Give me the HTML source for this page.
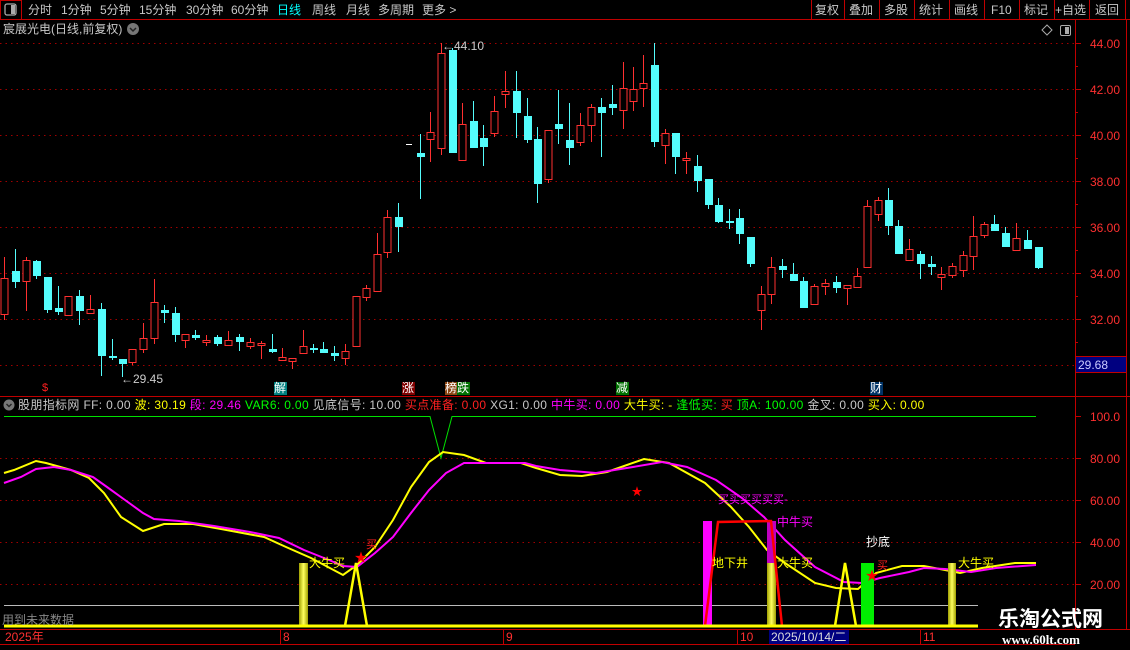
<!DOCTYPE html>
<html><head><meta charset="utf-8">
<style>
*{margin:0;padding:0;box-sizing:border-box}
body{width:1130px;height:650px;background:#000;overflow:hidden;position:relative;font-family:"Liberation Sans","Noto Sans CJK SC",sans-serif;font-size:12px;color:#c8c8c8}
.a{position:absolute;white-space:nowrap;line-height:14px}
svg{position:absolute;left:0;top:0}
</style></head><body>
<svg id="s" width="1130" height="650" xmlns="http://www.w3.org/2000/svg">
<line x1="0" y1="19.5" x2="1130" y2="19.5" stroke="#c00000"/>
<rect x="0.5" y="0.5" width="21" height="19" fill="none" stroke="#c00000"/>
<rect x="5" y="4" width="11" height="11" rx="2" fill="none" stroke="#aaa" stroke-width="1.3"/>
<rect x="11" y="5" width="4" height="9" fill="#aaa"/>
<g stroke="#c00000">
<line x1="811.5" y1="0" x2="811.5" y2="19"/><line x1="844.5" y1="0" x2="844.5" y2="19"/><line x1="879.5" y1="0" x2="879.5" y2="19"/><line x1="914.5" y1="0" x2="914.5" y2="19"/><line x1="949.5" y1="0" x2="949.5" y2="19"/><line x1="984.5" y1="0" x2="984.5" y2="19"/><line x1="1019.5" y1="0" x2="1019.5" y2="19"/><line x1="1054.5" y1="0" x2="1054.5" y2="19"/><line x1="1089.5" y1="0" x2="1089.5" y2="19"/><line x1="1125.5" y1="0" x2="1125.5" y2="19"/>
</g>
<circle cx="133" cy="29" r="6" fill="#777"/><path d="M130 28 L133 31 L136 28" fill="none" stroke="#222" stroke-width="1.5"/>
<path d="M1047 25 L1052 30 L1047 35 L1042 30 Z" fill="none" stroke="#aaa"/>
<rect x="1060.5" y="25.5" width="10" height="10" rx="1.5" fill="none" stroke="#aaa"/><rect x="1065" y="27" width="4" height="7" fill="#aaa"/>
<line x1="1075.5" y1="19" x2="1075.5" y2="629" stroke="#c00000"/>
<line x1="1126.5" y1="19" x2="1126.5" y2="629" stroke="#c00000"/>
<rect x="1075.5" y="356.5" width="51" height="16" fill="#000080" stroke="#c00000"/>
<g stroke="#a00000" stroke-dasharray="1.5,4">
<line x1="0" y1="43.5" x2="1075" y2="43.5"/><line x1="0" y1="89.5" x2="1075" y2="89.5"/><line x1="0" y1="135.5" x2="1075" y2="135.5"/><line x1="0" y1="181.5" x2="1075" y2="181.5"/><line x1="0" y1="227.5" x2="1075" y2="227.5"/><line x1="0" y1="273.5" x2="1075" y2="273.5"/><line x1="0" y1="319.5" x2="1075" y2="319.5"/><line x1="0" y1="365.5" x2="1075" y2="365.5"/>
<line x1="0" y1="458.5" x2="1075" y2="458.5"/><line x1="0" y1="500.5" x2="1075" y2="500.5"/><line x1="0" y1="542.5" x2="1075" y2="542.5"/><line x1="0" y1="584.5" x2="1075" y2="584.5"/>
</g>
<g stroke="#c00000">
<line x1="1075" y1="43.5" x2="1081" y2="43.5"/><line x1="1075" y1="89.5" x2="1081" y2="89.5"/><line x1="1075" y1="135.5" x2="1081" y2="135.5"/><line x1="1075" y1="181.5" x2="1081" y2="181.5"/><line x1="1075" y1="227.5" x2="1081" y2="227.5"/><line x1="1075" y1="273.5" x2="1081" y2="273.5"/><line x1="1075" y1="319.5" x2="1081" y2="319.5"/>
<line x1="1075" y1="66.5" x2="1078" y2="66.5"/><line x1="1075" y1="112.5" x2="1078" y2="112.5"/><line x1="1075" y1="158.5" x2="1078" y2="158.5"/><line x1="1075" y1="204.5" x2="1078" y2="204.5"/><line x1="1075" y1="250.5" x2="1078" y2="250.5"/><line x1="1075" y1="296.5" x2="1078" y2="296.5"/><line x1="1075" y1="342.5" x2="1078" y2="342.5"/>
<line x1="1075" y1="416.5" x2="1081" y2="416.5"/><line x1="1075" y1="458.5" x2="1081" y2="458.5"/><line x1="1075" y1="500.5" x2="1081" y2="500.5"/><line x1="1075" y1="542.5" x2="1081" y2="542.5"/><line x1="1075" y1="584.5" x2="1081" y2="584.5"/>
</g>
<line x1="0" y1="396.5" x2="1130" y2="396.5" stroke="#c00000"/>
<g id="candles"></g>
<line x1="406" y1="144.5" x2="412" y2="144.5" stroke="#fff"/>
<rect x="274" y="382" width="13" height="13" fill="#008080"/>
<rect x="402" y="382" width="13" height="13" fill="#800000"/>
<rect x="445" y="382" width="12" height="13" fill="#8b4513"/>
<rect x="457" y="382" width="13" height="13" fill="#007000"/>
<rect x="616" y="382" width="13" height="13" fill="#007000"/>
<rect x="870" y="382" width="13" height="13" fill="#003366"/>
<circle cx="9" cy="405" r="5.5" fill="#777"/><path d="M6.5 404 L9 406.5 L11.5 404" fill="none" stroke="#222" stroke-width="1.4"/>
<polyline points="4,416.5 430,416.5 441,458 452,416.5 1036,416.5" fill="none" stroke="#00e000"/>
<line x1="4" y1="605.5" x2="978" y2="605.5" stroke="#bbb"/>
<polyline fill="none" stroke="#ffff00" stroke-width="2" points="4,473 14,470 36,461 46,463 71,470 89,478 104,493 121,517 143,531 164,524 193,524 221,529 264,537 286,547 311,558 343,575 357,565 375,547 393,520 411,487 429,462 443,452 464,455 486,463 521,463 536,468 560,475 582,476 607,472 644,459 669,463 705,483 731,507 749,527 767,550 785,563 815,583 836,588 858,589 876,573 902,566 924,566 945,570 960,573 982,568 1015,563 1036,563"/>
<polyline fill="none" stroke="#ff00ff" stroke-width="2" points="4,483 21,477 36,469 54,467 71,470 93,477 107,487 125,500 143,513 154,519 179,521 214,526 250,532 279,538 304,550 329,560 343,566 357,567 375,553 393,537 411,513 429,490 446,473 464,463 500,463 525,463 536,466 560,470 596,473 633,467 662,462 687,467 716,480 742,498 764,517 785,540 815,567 844,582 862,583 880,578 909,572 924,568 945,569 971,572 996,568 1036,565"/>
<defs><linearGradient id="yg" x1="0" x2="1"><stop offset="0" stop-color="#a0a000"/><stop offset="0.5" stop-color="#ffff60"/><stop offset="1" stop-color="#a0a000"/></linearGradient></defs>
<rect x="299" y="563" width="9" height="63" fill="url(#yg)"/>
<rect x="767" y="563" width="9" height="63" fill="url(#yg)"/>
<rect x="948" y="563" width="8" height="63" fill="url(#yg)"/>
<rect x="767" y="521" width="9" height="42" fill="#c000c0"/>
<rect x="703" y="521" width="9" height="105" fill="#ff00ff"/>
<rect x="861" y="563" width="13" height="63" fill="#00ee00"/>
<polyline points="705,626 718,522 771,521 782,626" fill="none" stroke="#ff0000" stroke-width="2.5"/>
<polyline points="345,626 356,563 367,626" fill="none" stroke="#ffff00" stroke-width="2.5"/>
<polyline points="835,626 845,563 856,626" fill="none" stroke="#ffff00" stroke-width="2.5"/>
<line x1="4" y1="626" x2="978" y2="626" stroke="#ffff00" stroke-width="3"/>
<text x="361" y="562" fill="#ff0000" font-size="13" text-anchor="middle">★</text>
<text x="637" y="495" fill="#ff0000" font-size="11" text-anchor="middle">★</text>
<text x="872" y="580" fill="#ff0000" font-size="13" text-anchor="middle">★</text>
<line x1="0" y1="629.5" x2="1130" y2="629.5" stroke="#c00000"/>
<line x1="0" y1="644.5" x2="1075" y2="644.5" stroke="#c00000"/>
<g stroke="#c00000"><line x1="280.5" y1="630" x2="280.5" y2="644"/><line x1="503.5" y1="630" x2="503.5" y2="644"/><line x1="737.5" y1="630" x2="737.5" y2="644"/><line x1="920.5" y1="630" x2="920.5" y2="644"/></g>
<rect x="769" y="630" width="80" height="14" fill="#000080"/>
</svg>

<div class="a" style="left:28px;top:3px">分时</div>
<div class="a" style="left:61px;top:3px">1分钟</div>
<div class="a" style="left:100px;top:3px">5分钟</div>
<div class="a" style="left:139px;top:3px">15分钟</div>
<div class="a" style="left:186px;top:3px">30分钟</div>
<div class="a" style="left:231px;top:3px">60分钟</div>
<div class="a" style="left:277px;top:3px;color:#00ffff">日线</div>
<div class="a" style="left:312px;top:3px">周线</div>
<div class="a" style="left:346px;top:3px">月线</div>
<div class="a" style="left:378px;top:3px">多周期</div>
<div class="a" style="left:422px;top:3px">更多 &gt;</div>
<div class="a" style="left:815px;top:3px">复权</div>
<div class="a" style="left:849px;top:3px">叠加</div>
<div class="a" style="left:884px;top:3px">多股</div>
<div class="a" style="left:919px;top:3px">统计</div>
<div class="a" style="left:954px;top:3px">画线</div>
<div class="a" style="left:991px;top:3px">F10</div>
<div class="a" style="left:1024px;top:3px">标记</div>
<div class="a" style="left:1055px;top:3px">+自选</div>
<div class="a" style="left:1095px;top:3px">返回</div>
<div class="a" style="left:3px;top:22px">宸展光电(日线,前复权)</div>

<div class="a" style="left:1090px;top:37px;color:#ff3030">44.00</div>
<div class="a" style="left:1090px;top:83px;color:#ff3030">42.00</div>
<div class="a" style="left:1090px;top:129px;color:#ff3030">40.00</div>
<div class="a" style="left:1090px;top:175px;color:#ff3030">38.00</div>
<div class="a" style="left:1090px;top:221px;color:#ff3030">36.00</div>
<div class="a" style="left:1090px;top:267px;color:#ff3030">34.00</div>
<div class="a" style="left:1090px;top:313px;color:#ff3030">32.00</div>
<div class="a" style="left:1078px;top:358px;color:#ccccff">29.68</div>
<div class="a" style="left:1090px;top:410px;color:#ff3030">100.0</div>
<div class="a" style="left:1090px;top:452px;color:#ff3030">80.00</div>
<div class="a" style="left:1090px;top:494px;color:#ff3030">60.00</div>
<div class="a" style="left:1090px;top:536px;color:#ff3030">40.00</div>
<div class="a" style="left:1090px;top:578px;color:#ff3030">20.00</div>
<div class="a" style="left:442px;top:39px;color:#ccc">←44.10</div>
<div class="a" style="left:121px;top:372px;color:#ccc">←29.45</div>

<div class="a" style="left:42px;top:381px;color:#ff2020;font-size:11px">$</div>
<div class="a" style="left:274px;top:381px;color:#fff">解</div>
<div class="a" style="left:402px;top:381px;color:#fff">涨</div>
<div class="a" style="left:445px;top:381px;color:#fff">榜跌</div>
<div class="a" style="left:616px;top:381px;color:#fff">减</div>
<div class="a" style="left:870px;top:381px;color:#fff">财</div>

<div class="a" style="left:18px;top:398px;letter-spacing:0.35px">股朋指标网 <span>FF: 0.00</span> <span style="color:#ffff00">波: 30.19</span> <span style="color:#ff00ff">段: 29.46</span> <span style="color:#00ff00">VAR6: 0.00</span> <span>见底信号: 10.00</span> <span style="color:#ff2020">买点准备: 0.00</span> <span>XG1: 0.00</span> <span style="color:#ff00ff">中牛买: 0.00</span> <span style="color:#ffff00">大牛买: -</span> <span style="color:#00ff00">逢低买:</span> <span style="color:#ff2020">买</span> <span style="color:#00ff00">顶A: 100.00</span> <span>金叉: 0.00</span> <span style="color:#ffff00">买入: 0.00</span></div>

<div class="a" style="left:309px;top:556px;color:#ffff00">大牛买</div>
<div class="a" style="left:366px;top:538px;color:#ff2020;font-size:11px">买</div>
<div class="a" style="left:718px;top:493px;color:#ff00ff;font-size:11px">买买买买买买-</div>
<div class="a" style="left:777px;top:515px;color:#ff00ff">中牛买</div>
<div class="a" style="left:712px;top:556px;color:#ffff00">地下井</div>
<div class="a" style="left:777px;top:556px;color:#ffff00">大牛买</div>
<div class="a" style="left:866px;top:535px;color:#fff">抄底</div>
<div class="a" style="left:877px;top:559px;color:#ff2020;font-size:11px">买</div>
<div class="a" style="left:958px;top:556px;color:#ffff00">大牛买</div>
<div class="a" style="left:2px;top:613px;color:#888">用到未来数据</div>

<div class="a" style="left:5px;top:630px;color:#ff3030">2025年</div>
<div class="a" style="left:283px;top:630px;color:#ff3030">8</div>
<div class="a" style="left:506px;top:630px;color:#ff3030">9</div>
<div class="a" style="left:740px;top:630px;color:#ff3030">10</div>
<div class="a" style="left:771px;top:630px;color:#ddd">2025/10/14/二</div>
<div class="a" style="left:923px;top:630px;color:#ff3030">11</div>

<div class="a" style="left:998px;top:608px;color:#fff;font-size:21px;font-weight:bold;line-height:24px">乐淘公式网</div>
<div class="a" style="left:1002px;top:632px;color:#fff;font-family:'Liberation Serif',serif;font-size:13px;font-weight:bold;line-height:15px">www.60lt.com</div>

<script>
var C=[
[4,278,314,257,320,1],[15,271,282,249,288,0],[26,260,281,257,311,1],[36,261,276,260,279,0],[47,277,310,277,313,0],[58,308,312,286,315,0],[68,296,315,296,315,1],[79,296,311,290,325,0],[90,309,313,295,314,1],[101,309,356,303,376,0],[112,356,358,339,360,0],[122,359,364,359,377,0],[132,349,362,349,365,1],[143,338,349,323,353,1],[154,302,338,279,344,1],[164,310,313,305,323,0],[175,313,335,307,342,0],[185,334,340,334,348,1],[195,335,338,330,340,0],[206,340,342,335,346,1],[217,337,344,335,346,0],[228,340,345,331,345,1],[239,337,342,334,351,0],[250,342,346,338,349,1],[261,343,345,341,359,1],[272,349,352,334,353,0],[282,357,360,348,360,1],[292,358,361,358,369,1],[303,346,353,330,353,1],[313,348,349,344,353,0],[323,349,353,342,353,0],[334,353,356,346,361,0],[345,351,358,344,365,1],[356,296,346,296,346,1],[366,288,297,285,301,1],[377,254,291,233,291,1],[387,217,252,210,258,1],[398,217,227,203,252,0],
[420,153,157,134,199,0],[430,132,139,112,162,1],[441,53,148,43,155,1],[452,50,153,48,153,0],[462,124,160,103,161,1],[473,121,148,101,148,0],[483,138,147,125,166,0],[494,111,133,96,137,1],[505,91,94,71,108,1],[516,91,113,71,138,0],[527,116,140,98,143,0],[537,139,184,127,203,0],[548,130,179,130,183,1],[558,124,129,90,144,0],[569,140,148,103,165,0],[580,125,142,113,146,1],[591,107,125,104,142,1],[601,107,113,98,157,0],[612,104,108,85,115,0],[623,88,110,62,129,1],[633,89,101,67,111,1],[643,83,88,55,107,1],[654,65,142,43,147,0],[665,133,145,129,164,1],[675,133,157,133,174,0],[686,158,160,152,174,1],[697,166,181,155,192,0],[708,179,205,179,209,0],
[718,205,222,198,223,0],[729,221,223,209,229,0],[739,218,234,209,244,0],[750,237,264,237,267,0],[761,294,310,286,330,1],[771,267,294,257,304,1],[782,266,270,259,278,0],[793,274,281,263,281,0],[803,281,308,277,308,0],[814,286,304,284,304,1],[825,283,286,279,295,1],[836,282,288,276,293,0],[847,285,288,285,305,1],[857,276,287,268,287,1],[867,206,267,200,267,1],[878,200,214,197,221,1],[888,200,226,188,235,0],[898,226,254,220,254,0],[909,249,260,239,261,1],[920,254,264,251,279,0],[931,264,267,256,275,0],[941,274,277,267,290,1],[952,266,275,263,278,1],[963,255,270,251,277,1],[973,236,256,216,270,1],[984,224,235,222,238,1],[994,224,231,215,231,0],[1005,233,247,227,247,0],[1016,238,250,223,250,1],[1027,240,249,230,249,0],[1038,247,268,247,269,0]];
var g=document.getElementById('candles'),h='';
C.forEach(function(c){var x=c[0],col=c[5]?'#ff3030':'#54fcfc';
h+='<line x1="'+(x+0.5)+'" y1="'+c[3]+'" x2="'+(x+0.5)+'" y2="'+c[4]+'" stroke="'+col+'"/>';
var hh=Math.max(c[2]-c[1],1);
if(c[5])h+='<rect x="'+(x-3)+'" y="'+(c[1]+0.5)+'" width="7" height="'+hh+'" fill="#000" stroke="'+col+'"/>';
else h+='<rect x="'+(x-3)+'" y="'+c[1]+'" width="8" height="'+(hh<2?2:hh)+'" fill="'+col+'"/>';});
g.innerHTML=h;
</script>
</body></html>
